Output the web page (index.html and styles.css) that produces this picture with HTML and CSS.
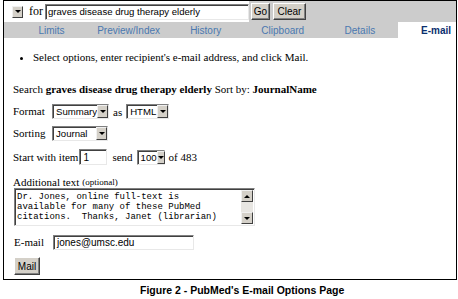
FILE: index.html
```html
<!DOCTYPE html>
<html>
<head>
<meta charset="utf-8">
<link rel="stylesheet" href="styles.css">
</head>
<body>
<div class="frame">
  <div class="topbar">
    <div class="search-cell">
      <span class="mini-select"><span class="arrow"><i class="tri"></i></span></span>
      <span class="for">for</span>
      <span class="field term">graves disease drug therapy elderly</span>
    </div>
    <div class="btn-cell">
      <span class="btn go">Go</span>
      <span class="btn clear">Clear</span>
    </div>
  </div>
  <nav class="tabs">
    <span class="tab">Limits</span>
    <span class="tab">Preview/Index</span>
    <span class="tab">History</span>
    <span class="tab">Clipboard</span>
    <span class="tab">Details</span>
    <span class="tab active">E-mail</span>
  </nav>
  <div class="content">
    <ul class="notes">
      <li>Select options, enter recipient's e-mail address, and click Mail.</li>
    </ul>
    <div class="row search-row">Search&nbsp;<b>graves disease drug therapy elderly</b>&nbsp;Sort by:&nbsp;<b>JournalName</b></div>
    <div class="row format-row">
      <span class="label">Format</span>
      <span class="select w-summary"><span class="val">Summary</span><span class="arrow"><i class="tri"></i></span></span>
      <span class="as">as</span>
      <span class="select w-html"><span class="val">HTML</span><span class="arrow"><i class="tri"></i></span></span>
    </div>
    <div class="row sort-row">
      <span class="label">Sorting</span>
      <span class="select w-journal"><span class="val">Journal</span><span class="arrow"><i class="tri"></i></span></span>
    </div>
    <div class="row start-row">
      <span>Start with item</span>
      <span class="field w-start">1</span>
      <span class="send">send</span>
      <span class="select w-100"><span class="val">100</span><span class="arrow"><i class="tri"></i></span></span>
      <span class="of">of 483</span>
    </div>
    <div class="row add-label">Additional text <small>(optional)</small></div>
    <div class="textarea">
      <div class="ta-text">Dr. Jones, online full-text is<br>available for many of these PubMed<br>citations.&nbsp; Thanks, Janet (librarian)</div>
      <div class="ta-scroll">
        <span class="sbtn"><i class="tri up"></i></span>
        <span class="strack"></span>
        <span class="sbtn"><i class="tri"></i></span>
      </div>
    </div>
    <div class="row email-row">
      <span class="label">E-mail</span>
      <span class="field w-email">jones@umsc.edu</span>
    </div>
    <div class="mail-row"><span class="btn mail">Mail</span></div>
  </div>
</div>
<p class="caption">Figure 2 - PubMed's E-mail Options Page</p>
</body>
</html>
```

FILE: styles.css
```css
* { box-sizing: border-box; }
html, body { margin: 0; padding: 0; background: #fff; }
body { font-family: "Liberation Serif", "Times New Roman", serif; font-size: 11px; color: #000; }

.frame {
  margin-left: 3px;
  width: 454px;
  height: 280px;
  border: 1px solid #000;
  display: flex;
  flex-direction: column;
}

.topbar { display: flex; height: 21px; }
.search-cell { width: 245px; display: flex; align-items: center; padding-left: 8px; background: #fff; }
.btn-cell { flex: 1; display: flex; align-items: center; gap: 3px; padding-left: 2px; background: #cccccc; }

.mini-select { width: 11px; height: 12px; display: inline-flex; }
.mini-select .arrow { width: 11px; height: 12px; }
.for { margin-left: 6px; margin-right: 2px; font-size: 12px; }

.field {
  display: inline-flex; align-items: center;
  height: 16px;
  background: #fff;
  border: 1px solid; border-color: #808080 #e8e8e8 #e8e8e8 #808080;
  box-shadow: inset 1px 1px 0 #404040;
  padding-left: 3px;
  font-family: "Liberation Sans", Arial, sans-serif; font-size: 10px;
  white-space: nowrap;
}
.term { width: 204px; font-size: 9.6px; padding-left: 2px; }

.btn {
  display: inline-flex; align-items: center; justify-content: center;
  height: 17px;
  background: #d4d0c8;
  border: 1px solid; border-color: #fff #404040 #404040 #fff;
  box-shadow: inset -1px -1px 0 #808080;
  font-family: "Liberation Sans", Arial, sans-serif; font-size: 10px;
  padding: 0 2px;
}
.go { width: 19px; }
.clear { width: 33px; }

.tabs { display: flex; height: 16px; background: #cccccc; padding-left: 9px; align-items: stretch; }
.tab {
  width: 77.6px; display: flex; align-items: center; justify-content: center;
  font-family: "Liberation Sans", Arial, sans-serif; font-size: 10px; color: #4a78b0;
}
.tab.active {
  margin-left: auto; width: 58px; justify-content: flex-end; padding-right: 5px;
  background: #fff; color: #0b2f6e; font-weight: bold;
}

.content { padding-left: 9px; }
.notes { margin: 12px 0 0; padding-left: 20px; line-height: 14px; }
.row { display: flex; align-items: center; white-space: nowrap; }
.search-row { margin-top: 18px; height: 14px; }
.format-row { margin-top: 7px; height: 16px; }
.sort-row { margin-top: 6px; height: 16px; }
.start-row { margin-top: 8px; height: 16px; }
.add-label { margin-top: 10px; height: 13px; }
.add-label small { font-size: 9px; margin-left: 3px; }
.label { width: 39px; }

.select {
  display: inline-flex; height: 15px;
  background: #fff;
  border: 1px solid; border-color: #808080 #e8e8e8 #e8e8e8 #808080;
  box-shadow: inset 1px 1px 0 #404040;
  font-family: "Liberation Sans", Arial, sans-serif; font-size: 9.6px;
}
.select .val { flex: 1; display: flex; align-items: center; padding-left: 3px; }
.arrow {
  width: 11px; display: flex; align-items: center; justify-content: center;
  background: #d4d0c8;
  border: 1px solid; border-color: #f0f0f0 #404040 #404040 #f0f0f0;
}
.tri { display: block; width: 0; height: 0; border-left: 3px solid transparent; border-right: 3px solid transparent; border-top: 3px solid #000; }
.tri.up { border-top: 0; border-bottom: 3px solid #000; }
.w-summary { width: 57px; }
.w-html { width: 43px; }
.w-journal { width: 56px; }
.w-100 { width: 28px; }
.as { margin: 0 4px; position: relative; top: 1px; }
.w-start { width: 28px; margin-left: 1px; }
.send { margin: 0 4px 0 5px; }
.of { margin-left: 4px; }

.textarea {
  margin: 0 0 0 1px;
  width: 241px; height: 38px;
  display: flex;
  border: 1px solid; border-color: #808080 #e8e8e8 #e8e8e8 #808080;
  box-shadow: inset 1px 1px 0 #404040;
  background: #fff;
}
.ta-text {
  flex: 1; padding: 3px 0 0 2px;
  font-family: "Liberation Mono", "Courier New", monospace; font-size: 9px; line-height: 10px;
  white-space: nowrap;
}
.ta-scroll { width: 13px; display: flex; flex-direction: column; padding: 1px 1px 1px 0; }
.sbtn {
  height: 12px; display: flex; align-items: center; justify-content: center;
  background: #d4d0c8;
  border: 1px solid; border-color: #f0f0f0 #404040 #404040 #f0f0f0;
}
.strack { flex: 1; background: #e8e6e2; }

.email-row { margin: 8px 0 0 1px; height: 16px; }
.w-email { width: 141px; height: 15px; }
.mail-row { margin: 7px 0 0 1px; }
.mail { width: 26px; height: 18px; }

.caption {
  margin: 4px 0 0;
  padding-left: 140px;
  font-family: "Liberation Sans", Arial, sans-serif; font-weight: bold; font-size: 10.5px;
}
```
